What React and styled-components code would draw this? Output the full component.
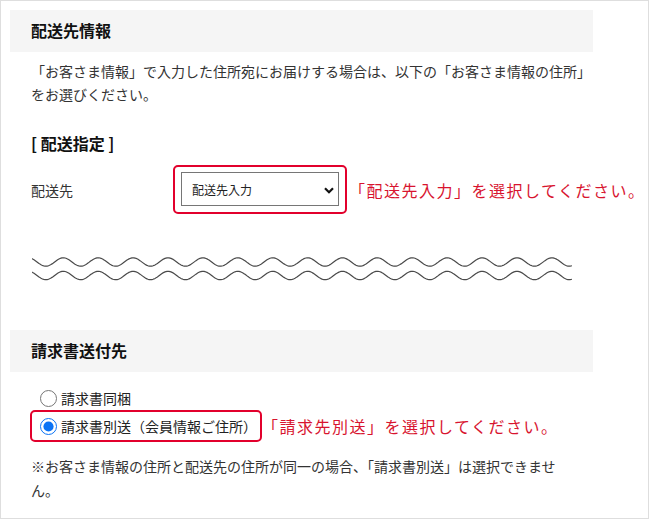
import React from "react";
import styled, { createGlobalStyle } from "styled-components";

const GlobalStyle = createGlobalStyle`
  html, body { margin: 0; padding: 0; background: #fff; }
  body {
    font-family: "Noto Sans CJK JP", "Noto Sans", sans-serif;
    color: #333;
  }
  * { box-sizing: border-box; }
`;

const RED_TEXT = "#d8142f";
const RED_LINE = "#e2002c";

const Frame = styled.div`
  width: 649px;
  height: 519px;
  border: 1px solid #dedede;
  padding: 9px 55px 0 9px;
  overflow: hidden;
`;

const Band = styled.h2`
  margin: ${(p) => p.$top || 0}px 0 0 0;
  height: 42px;
  background: #f5f5f5;
  padding-left: 21px;
  padding-bottom: 3px;
  display: flex;
  align-items: center;
  font-size: 16px;
  font-weight: 700;
  color: #111;
  letter-spacing: 0;
`;

const Body = styled.div`
  padding-left: 21px;
`;

const Lead = styled.p`
  margin: 8px 0 0 0;
  font-size: 14px;
  line-height: 23px;
  color: #333;
`;

const SubHeading = styled.h3`
  margin: 26px 0 0 0;
  font-size: 16px;
  line-height: 23px;
  font-weight: 700;
  color: #111;
`;

const FieldRow = styled.div`
  margin-top: 10px;
  display: flex;
  align-items: center;
  & > * { flex-shrink: 0; }
`;

const FieldLabel = styled.div`
  width: 142px;
  font-size: 14px;
  line-height: 20px;
  color: #333;
`;

const Highlight = styled.div`
  border: 2px solid ${RED_LINE};
  border-radius: 5px;
  padding: 5px 6px 6px 6px;
`;

const SelectWrap = styled.div`
  position: relative;
  width: 158px;
  height: 34px;
`;

const Select = styled.select`
  appearance: none;
  -webkit-appearance: none;
  width: 158px;
  height: 34px;
  margin: 0;
  border: 1px solid #767676;
  border-radius: 0;
  background: #fff;
  padding: 0 24px 0 10px;
  font-family: "Noto Sans CJK JP", sans-serif;
  font-size: 12px;
  color: #222;
  outline: none;
`;

const Chevron = styled.svg`
  position: absolute;
  right: 5px;
  top: 15px;
  pointer-events: none;
`;

const Hint = styled.span`
  margin-left: 2px;
  font-size: 16px;
  letter-spacing: 1.5px;
  color: ${RED_TEXT};
  line-height: 22px;
  white-space: nowrap;
`;

const Squiggle = styled.svg`
  display: block;
  margin: 41px 0 0 1px;
`;

const RadioList = styled.div`
  margin: 12px 0 0 1px;
  display: flex;
  flex-direction: column;
  align-items: flex-start;
`;

const RadioLine = styled.div`
  display: flex;
  align-items: center;
  & > * { flex-shrink: 0; }
`;

const RadioItem = styled.label`
  display: inline-flex;
  align-items: center;
  gap: 4px;
  height: 28px;
  padding: 0 3px 0 8px;
  border-radius: 3px;
  outline: ${(p) => (p.$marked ? `2px solid ${RED_LINE}` : "none")};
  font-size: 14px;
  color: #222;
  cursor: pointer;
`;

const Radio = styled.input`
  width: 17px;
  height: 17px;
  margin: 0;
  accent-color: #0a73f5;
`;

const Note = styled.p`
  margin: 14px 0 0 0;
  max-width: 540px;
  font-size: 14px;
  line-height: 24px;
  color: #333;
`;

const W = 540;
function wavePath(cy) {
  const A = 4.2;
  let d = "";
  for (let x = 0; x <= W; x += 1) {
    const px = 32 + x;
    const y = cy - A * Math.cos((2 * Math.PI * (px - 28.4)) / 34.9);
    d += (x ? "L" : "M") + x + " " + y.toFixed(2);
  }
  return d;
}

export default function App() {
  const [billing, setBilling] = React.useState("separate");
  return (
    <>
      <GlobalStyle />
      <Frame>
        <Band>配送先情報</Band>
        <Body>
          <Lead>
            「お客さま情報」で入力した住所宛にお届けする場合は、以下の「お客さま情報の住所」
            <br />
            をお選びください。
          </Lead>
          <SubHeading>[ 配送指定 ]</SubHeading>
          <FieldRow>
            <FieldLabel>配送先</FieldLabel>
            <Highlight>
              <SelectWrap>
                <Select defaultValue="input">
                  <option value="input">配送先入力</option>
                  <option value="same">お客さま情報の住所</option>
                </Select>
                <Chevron width="10" height="7" viewBox="0 0 10 7">
                  <path d="M1 1.2 L5 5.2 L9 1.2" fill="none" stroke="#111" strokeWidth="2.2" />
                </Chevron>
              </SelectWrap>
            </Highlight>
            <Hint>「配送先入力」を選択してください。</Hint>
          </FieldRow>
          <Squiggle width={W} height="26" viewBox={`0 0 ${W} 26`}>
            <path d={wavePath(7)} fill="none" stroke="#4a4a4a" strokeWidth="1.2" />
            <path d={wavePath(20.5)} fill="none" stroke="#4a4a4a" strokeWidth="1.2" />
          </Squiggle>
        </Body>
        <Band $top={49}>請求書送付先</Band>
        <Body>
          <RadioList>
            <RadioLine>
              <RadioItem>
                <Radio
                  type="radio"
                  name="billing"
                  checked={billing === "bundle"}
                  onChange={() => setBilling("bundle")}
                />
                請求書同梱
              </RadioItem>
            </RadioLine>
            <RadioLine>
              <RadioItem $marked>
                <Radio
                  type="radio"
                  name="billing"
                  checked={billing === "separate"}
                  onChange={() => setBilling("separate")}
                />
                請求書別送（会員情報ご住所）
              </RadioItem>
              <Hint>「請求先別送」を選択してください。</Hint>
            </RadioLine>
          </RadioList>
          <Note>
            ※お客さま情報の住所と配送先の住所が同一の場合、「請求書別送」は選択できません。
          </Note>
        </Body>
      </Frame>
    </>
  );
}
